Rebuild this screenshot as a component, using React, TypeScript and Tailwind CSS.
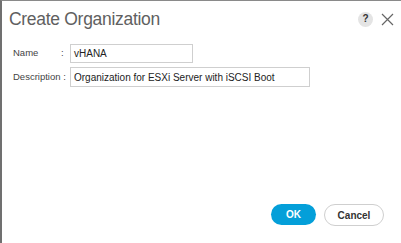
export default function App() {
  return (
    <div className="flex h-[243px] w-[401px] flex-col overflow-hidden border-l-2 border-t border-l-[#707070] border-t-[#8a8a8a] bg-white font-['Liberation_Sans',Arial,sans-serif]">
      <div className="flex h-[35px] items-center justify-between pl-[7px] pr-[7px] pt-[1px]">
        <h1 className="text-[17.5px] font-normal tracking-[-0.3px] text-[#606060]">Create Organization</h1>
        <div className="flex items-center gap-[8px]">
          <span className="flex h-[15px] w-[15px] items-center justify-center rounded-full bg-[#e4e4e4] text-[10px] font-bold leading-none text-[#333]">?</span>
          <svg width="13" height="13" viewBox="0 0 13 13" className="text-[#666]">
            <path d="M1 1L12 12M12 1L1 12" stroke="currentColor" strokeWidth="1.2" fill="none" />
          </svg>
        </div>
      </div>
      <div className="flex flex-col gap-[4px] pl-[11px] pt-[8px]">
        <div className="flex items-center">
          <span className="w-[48px] text-[9.5px] text-[#444]">Name</span>
          <span className="w-[9px] text-[9.5px] text-[#444]">:</span>
          <div className="flex h-[19px] w-[123px] items-center border border-[#cfcfcf] px-[3px] text-[10px] text-[#222]">vHANA</div>
        </div>
        <div className="flex items-center">
          <span className="w-[53px] text-[9.5px] text-[#444]">Description :</span>
          <span className="w-[4px]" />
          <div className="flex h-[20px] w-[240px] items-center border border-[#cfcfcf] px-[3px] text-[10px] text-[#222]">Organization for ESXi Server with iSCSI Boot</div>
        </div>
      </div>
      <div className="mt-auto flex justify-end gap-[8px] pb-[17px] pr-[17px]">
        <button className="flex h-[21px] w-[45px] items-center justify-center rounded-full bg-[#049fd9] text-[10px] font-bold text-white">OK</button>
        <button className="flex h-[22px] w-[60px] items-center justify-center rounded-full border border-[#cfcfcf] bg-white text-[10px] font-bold text-[#333]">Cancel</button>
      </div>
    </div>
  );
}
